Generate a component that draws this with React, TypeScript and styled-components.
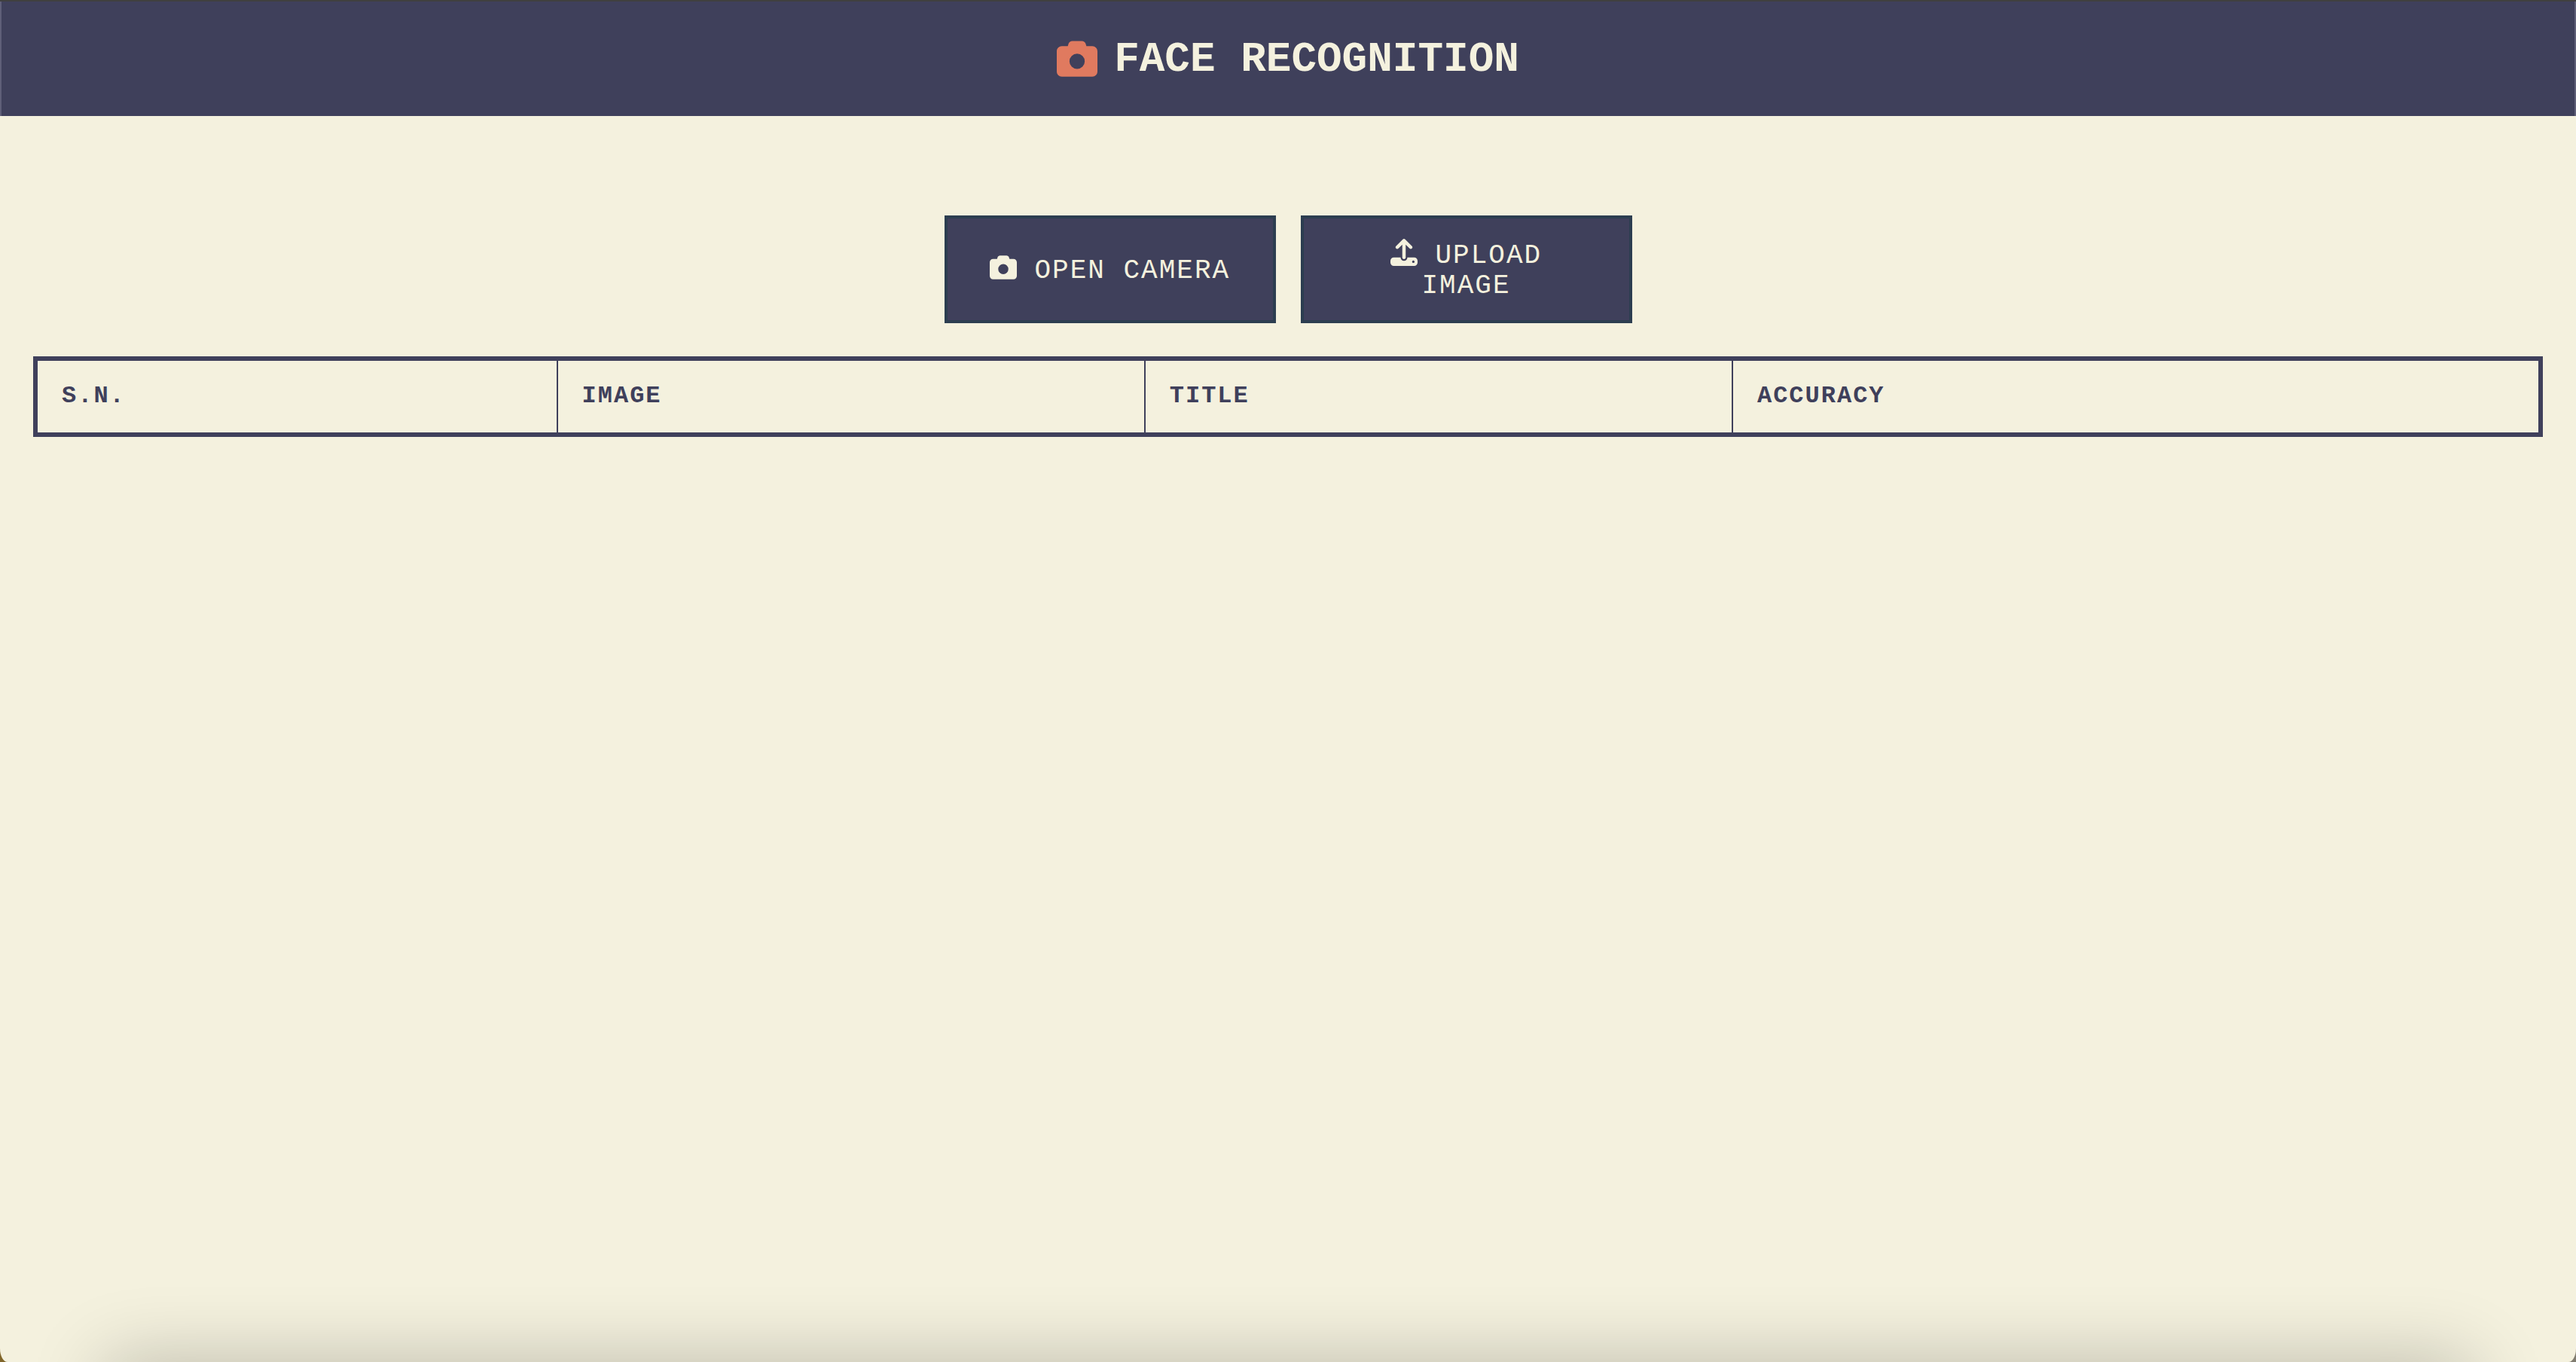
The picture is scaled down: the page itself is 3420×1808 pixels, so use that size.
import React from "react";
import styled, { createGlobalStyle } from "styled-components";
import { FaCamera, FaUpload } from "react-icons/fa6";

const colors = {
  cream: "#f4f1de",
  navy: "#3f405b",
  coral: "#e07a5f",
  slate: "#2c3e50",
};

const GlobalStyle = createGlobalStyle`
  *, *::before, *::after { box-sizing: border-box; }
  html { background: linear-gradient(90deg, #80652a, #807c70); }
  body {
    margin: 0;
    font-family: "Courier New", "Liberation Mono", monospace;
    color: ${colors.navy};
  }
`;

const Page = styled.div`
  position: relative;
  display: flex;
  flex-direction: column;
  min-height: 100vh;
  overflow: hidden;
  background: ${colors.cream};
  border-radius: 0 0 10px 10px / 0 0 18px 18px;
`;

const Header = styled.header`
  display: flex;
  justify-content: center;
  padding: 45px 32px 43px;
  background: ${colors.navy};
  border-top: 2px solid #404040;
  box-shadow: inset 2px 0 #5f5f78, inset -2px 0 #5f5f78;
`;

const Title = styled.h1`
  display: flex;
  align-items: center;
  gap: 22px;
  margin: 0;
  font-size: 56px;
  line-height: 64px;
  color: ${colors.cream};
`;

const TitleIcon = styled(FaCamera)`
  width: 54px;
  height: 54px;
  margin-bottom: 2px;
  color: ${colors.coral};
`;

const Main = styled.main`
  display: flex;
  flex-direction: column;
  gap: 44px;
  padding: 132px 44px 44px;
`;

const Actions = styled.div`
  display: flex;
  justify-content: center;
  gap: 33px;
`;

const ActionButton = styled.button`
  width: 440px;
  min-height: 143px;
  padding: 2px 48px 0;
  border: 4px solid ${colors.slate};
  background: ${colors.navy};
  color: ${colors.cream};
  font-family: inherit;
  font-size: 36px;
  line-height: 40px;
  letter-spacing: 2px;
  text-align: center;
  cursor: pointer;

  svg {
    width: 36px;
    height: 36px;
    vertical-align: -4px;
  }
`;

const Results = styled.table`
  width: 100%;
  table-layout: fixed;
  border-collapse: separate;
  border-spacing: 0;
  border: 6px solid ${colors.navy};
`;

const HeadCell = styled.th<{ $share?: string }>`
  width: ${(p) => p.$share ?? "auto"};
  padding: 29px 32px 30px;
  text-align: left;
  font-size: 32px;
  line-height: 36px;
  letter-spacing: 2px;

  &:not(:last-child) {
    border-right: 2px solid ${colors.navy};
  }
`;

const DockShadow = styled.div`
  position: absolute;
  left: 140px;
  right: 140px;
  bottom: -100px;
  height: 100px;
  box-shadow: 0 0 100px rgba(0, 0, 0, 0.24);
  pointer-events: none;
`;

const columns = [
  { label: "S.N.", share: "20.8%" },
  { label: "IMAGE", share: "23.5%" },
  { label: "TITLE", share: "23.5%" },
  { label: "ACCURACY" },
];

export default function App() {
  return (
    <>
      <GlobalStyle />
      <Page>
        <Header>
          <Title>
            <TitleIcon aria-hidden />
            FACE RECOGNITION
          </Title>
        </Header>
        <Main>
          <Actions>
            <ActionButton type="button">
              <FaCamera aria-hidden /> OPEN CAMERA
            </ActionButton>
            <ActionButton type="button">
              <FaUpload aria-hidden /> UPLOAD IMAGE
            </ActionButton>
          </Actions>
          <Results>
            <thead>
              <tr>
                {columns.map((c) => (
                  <HeadCell key={c.label} scope="col" $share={c.share}>
                    {c.label}
                  </HeadCell>
                ))}
              </tr>
            </thead>
          </Results>
        </Main>
        <DockShadow />
      </Page>
    </>
  );
}
